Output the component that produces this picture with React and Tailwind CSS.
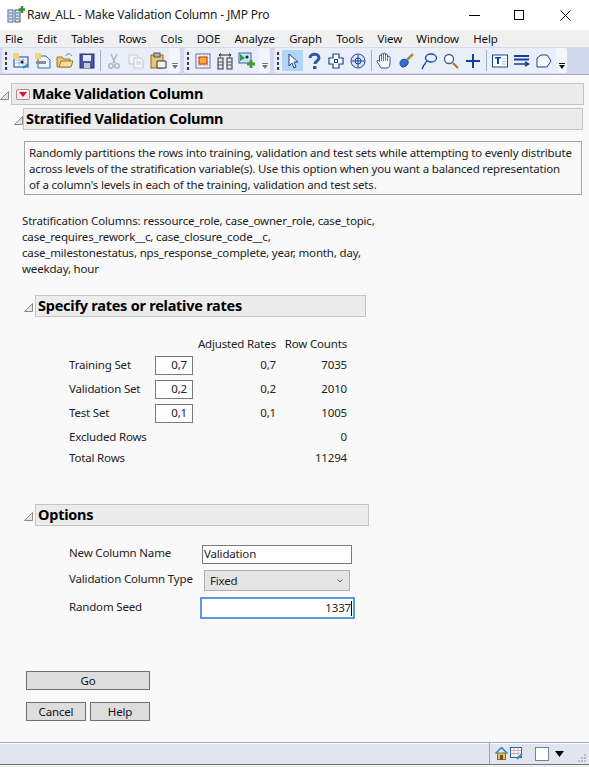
const font = { fontFamily: '"Noto Sans", sans-serif' };

function Ico({ children, w = 18 }) {
  return (
    <svg width={w} height="18" viewBox="0 0 18 18" fill="none" className="block shrink-0">
      {children}
    </svg>
  );
}

function Tri() {
  return (
    <svg width="10" height="10" viewBox="0 0 10 10" className="block shrink-0 mt-[4px]">
      <path d="M8.500 .5V8.500H.5Z" fill="#e4e4e4" stroke="#8a8a8a" strokeWidth="1" />
    </svg>
  );
}

function Grip() {
  return (
    <div className="flex flex-col gap-[2px] w-[3px] mx-[2px] shrink-0">
      <div className="w-[2px] h-[3px] bg-[#444]" />
      <div className="w-[2px] h-[3px] bg-[#444]" />
      <div className="w-[2px] h-[3px] bg-[#444]" />
      <div className="w-[2px] h-[3px] bg-[#444]" />
    </div>
  );
}

function Overflow({ dark }) {
  return (
    <div className="w-[11px] self-stretch bg-[#f2f5fb] rounded-r-[3px] flex flex-col items-center justify-end pb-[4px] gap-[1px]">
      <div className={dark ? 'w-[6px] h-[1px] bg-[#111]' : 'w-[6px] h-[1px] bg-[#777]'} />
      <svg width="6" height="4" viewBox="0 0 6 4" className="block"><path d="M0 0H6L3 4Z" fill={dark ? '#111' : '#777'} /></svg>
    </div>
  );
}

function Slot({ children, on }) {
  return (
    <div className={on ? 'w-[21px] h-[21px] bg-[#b4d4f5] flex items-center justify-center shrink-0' : 'w-[22px] h-[21px] flex items-center justify-center shrink-0'}>
      {children}
    </div>
  );
}

function Sep() {
  return <div className="w-px h-[21px] bg-[#a8b0c4] mx-[2px] shrink-0" />;
}

const blue = '#12439b';

function Toolbar() {
  return (
    <div className="h-[28px] bg-[#d3daee] border-b border-[#9fabd0] flex items-center pl-[2px] gap-[4px] shrink-0">
      <div className="h-[25px] w-[178px] bg-[#e9eef8] rounded-[3px] flex items-center pl-[1px]">
        <Grip />
        <div className="flex items-center">
          <Slot>
            <Ico>
              <rect x="2" y="5" width="14" height="10" fill="#fff" stroke={blue} />
              <path d="M2 8H16M2 11H16M7 5V15M11 5V15" stroke="#7f9ccc" strokeWidth=".7" />
              <rect x="1" y="1" width="6" height="6" fill="#f0d878" />
              <circle cx="10" cy="10" r="1.5" fill="#222" />
              <path d="M11 16L16 12" stroke="#2a8fd8" strokeWidth="2" />
            </Ico>
          </Slot>
          <Slot>
            <Ico>
              <path d="M4 4H12L16 8V16H4Z" fill="#eef4fb" stroke="#2c6fa8" />
              <rect x="1" y="1" width="6" height="6" fill="#f0d878" />
              <rect x="2" y="9" width="10" height="3" fill="#8d8d8d" />
            </Ico>
          </Slot>
          <Slot>
            <Ico>
              <path d="M1 15V5H6L8 7H14V15Z" fill="#e8c878" stroke="#9a7a30" />
              <path d="M3 15L5 9H17L15 15Z" fill="#f6dd9a" stroke="#9a7a30" />
              <path d="M10 4C11 1 14 1 16 4" stroke="#5a7fb0" />
            </Ico>
          </Slot>
          <Slot>
            <Ico>
              <rect x="2" y="2" width="14" height="14" fill="#4a55a8" stroke="#2a2f70" />
              <rect x="5" y="3" width="8" height="6" fill="#e4e8f4" />
              <rect x="6" y="11" width="6" height="5" fill="#c8c8d8" />
            </Ico>
          </Slot>
          <Sep />
          <Slot>
            <Ico>
              <path d="M6 2L10 11M12 2L8 11" stroke="#a9b8cc" strokeWidth="1.5" />
              <circle cx="6" cy="14" r="2.2" stroke="#a9b8cc" strokeWidth="1.5" />
              <circle cx="12" cy="14" r="2.2" stroke="#a9b8cc" strokeWidth="1.5" />
            </Ico>
          </Slot>
          <Slot>
            <Ico>
              <path d="M2 3H9L11 5V12H2Z" fill="#f2f4f8" stroke="#c2cbd9" />
              <path d="M7 6H14L16 8V16H7Z" fill="#f7f8fb" stroke="#c2cbd9" />
              <path d="M9 10H14M9 12H14" stroke="#c2cbd9" />
            </Ico>
          </Slot>
          <Slot>
            <Ico>
              <rect x="2" y="3" width="12" height="13" fill="#e8c878" stroke="#8a6a28" />
              <rect x="5" y="1" width="6" height="4" fill="#b4b4b4" stroke="#555" />
              <path d="M8 9H17V16H8Z" fill="#f4f4f4" stroke="#333" />
            </Ico>
          </Slot>
        </div>
        <div className="ml-auto self-stretch flex"><Overflow /></div>
      </div>
      <div className="h-[25px] w-[86px] bg-[#e9eef8] rounded-[3px] flex items-center pl-[1px]">
        <Grip />
        <div className="flex items-center">
          <Slot>
            <Ico>
              <rect x="2" y="2" width="14" height="14" fill="#fff" stroke="#5a6fa8" />
              <path d="M2 6H16M2 10H16M2 13H16M6 2V16M10 2V16M13 2V16" stroke="#d8a0a0" strokeWidth=".7" />
              <rect x="5" y="5" width="8" height="7" fill="#f0b040" stroke="#c03020" />
            </Ico>
          </Slot>
          <Slot>
            <Ico>
              <path d="M3 3H15M3 3L5 1.5M3 3L5 4.5M15 3L13 1.5M15 3L13 4.5" stroke="#222" />
              <rect x="2" y="6" width="5" height="11" fill="#dfe6f2" stroke="#333" />
              <rect x="11" y="6" width="5" height="11" fill="#dfe6f2" stroke="#333" />
              <path d="M2 10H7M2 13H7M11 10H16M11 13H16" stroke="#555" />
            </Ico>
          </Slot>
          <Slot>
            <Ico>
              <rect x="1" y="1" width="12" height="10" fill="#cfe0f4" stroke="#3a6a9a" />
              <path d="M2 2L7 6L2 9Z" fill="#2a9a5a" />
              <circle cx="9" cy="5" r="1.5" fill="#223" />
              <path d="M13 8V16M9 12H17" stroke="#3aa030" strokeWidth="3" />
            </Ico>
          </Slot>
        </div>
        <div className="ml-auto self-stretch flex"><Overflow /></div>
      </div>
      <div className="h-[25px] w-[293px] bg-[#e9eef8] rounded-[3px] flex items-center pl-[1px]">
        <Grip />
        <div className="flex items-center">
          <Slot on>
            <Ico>
              <path d="M5 2V14L8 11L10 16L12 15L10 10H14Z" fill="#fff" stroke={blue} />
            </Ico>
          </Slot>
          <Slot>
            <Ico>
              <path d="M5 6C5 1 14 1 14 6C14 9 10 9 10 12" stroke="#2a58a8" strokeWidth="3" />
              <rect x="8" y="14" width="3.5" height="3" fill="#2a58a8" />
            </Ico>
          </Slot>
          <Slot>
            <Ico>
              <path d="M6 2H12V6H16V12H12V16H6V12H2V6H6Z" fill="#fff" stroke={blue} strokeWidth="1.2" />
              <rect x="7.5" y="7.5" width="3" height="3" stroke={blue} />
            </Ico>
          </Slot>
          <Slot>
            <Ico>
              <circle cx="9" cy="9" r="7" fill="#dbe6f6" stroke={blue} />
              <circle cx="9" cy="9" r="3" stroke={blue} />
              <path d="M9 3V15M3 9H15" stroke={blue} />
            </Ico>
          </Slot>
          <Sep />
          <Slot>
            <Ico>
              <path d="M5 16L1 9.500C.5 8 2.500 8 3.500 9.500V4C3.500 2.800 5.500 2.800 5.500 4V2.500C5.500 1.300 7.500 1.300 7.500 2.500V2C7.500 .8 9.500 .8 9.500 2V3C9.500 1.800 11.500 1.800 11.500 3V5C11.500 4 14 4 14 5.500V11C14 14 13 16 11 16Z" fill="#fff" stroke={blue} strokeWidth=".9" />
              <path d="M5.500 4V9M7.500 2.500V9M9.500 3V9M11.500 5V9" stroke={blue} strokeWidth=".7" />
            </Ico>
          </Slot>
          <Slot>
            <Ico>
              <path d="M2 11C2 7 8 6 10 9C11 12 8 15 5 15C3 15 2 13 2 11Z" fill="#2f6fd0" stroke={blue} />
              <path d="M9 8L15 2" stroke="#b08a38" strokeWidth="2.500" />
            </Ico>
          </Slot>
          <Slot>
            <Ico>
              <ellipse cx="11" cy="6" rx="5.500" ry="4" stroke={blue} strokeWidth="1.300" />
              <path d="M7 9C5 10 6 12 4 13C3 14 3 16 2 17" stroke={blue} strokeWidth="1.300" />
            </Ico>
          </Slot>
          <Slot>
            <Ico>
              <circle cx="7" cy="7" r="4.500" fill="#fff" stroke="#405a90" strokeWidth="1.300" />
              <path d="M11 11L16 16" stroke="#a87a28" strokeWidth="2.200" />
            </Ico>
          </Slot>
          <Slot>
            <Ico>
              <path d="M9 2V16M2 9H16" stroke={blue} strokeWidth="2" />
            </Ico>
          </Slot>
          <Sep />
          <Slot>
            <Ico>
              <rect x="1.500" y="3" width="15" height="12" fill="#fff" stroke={blue} />
              <path d="M4 5H10V6.500H8V12H6V6.500H4Z" fill={blue} />
              <path d="M11 7H15M11 9.500H15M11 12H15" stroke="#a8c0e0" />
            </Ico>
          </Slot>
          <Slot>
            <Ico>
              <path d="M1 4H16M1 7.500H16" stroke={blue} strokeWidth="2" />
              <path d="M1 12H14M12 10L15.500 12L12 14" stroke={blue} strokeWidth="1.500" />
            </Ico>
          </Slot>
          <Slot>
            <Ico>
              <path d="M2 6L6 3H12L16 9L12 15H2Z" fill="#f6f8fc" stroke={blue} />
            </Ico>
          </Slot>
        </div>
        <div className="ml-auto self-stretch flex"><Overflow dark /></div>
      </div>
    </div>
  );
}

function Header({ title, className }) {
  return (
    <div className={'h-[22px] bg-[#ececec] border border-[#c4c4c4] flex items-center text-[14.5px] tracking-[-0.25px] font-bold text-black ' + className}>
      <span className="-mt-[1px]">{title}</span>
    </div>
  );
}

function TextBox({ value, className }) {
  return (
    <div className={'bg-white border border-[#7a7a7a] flex items-center ' + className}>{value}</div>
  );
}

function Button({ label, className }) {
  return (
    <button className={'h-[19px] bg-[#dddddd] border border-[#707070] text-[#111] flex items-center justify-center ' + className}>
      {label}
    </button>
  );
}

const rates = [
  ['Training Set', '0,7', '0,7', '7035'],
  ['Validation Set', '0,2', '0,2', '2010'],
  ['Test Set', '0,1', '0,1', '1005'],
];

const menus = ['File', 'Edit', 'Tables', 'Rows', 'Cols', 'DOE', 'Analyze', 'Graph', 'Tools', 'View', 'Window', 'Help'];

export default function App() {
  return (
    <div className="w-[589px] h-[767px] flex flex-col bg-[#f9f9f9] text-[11.5px] tracking-[-0.17px] text-[#222] overflow-hidden" style={font}>
      {/* title bar */}
      <div className="h-[30px] bg-white flex items-center shrink-0">
        <svg width="18" height="18" viewBox="0 0 18 18" className="ml-[7px] block shrink-0">
          <rect x="1" y="4" width="5" height="12" fill="#dfe8f5" stroke="#3e6fb0" />
          <rect x="8" y="4" width="5" height="12" fill="#dfe8f5" stroke="#555" />
          <path d="M2 7H5M2 10H5M2 13H5M9 7H12M9 10H12M9 13H12" stroke="#3e6fb0" />
          <path d="M15 0V7M11.500 3.500H18" stroke="#2a9a30" strokeWidth="2.500" />
        </svg>
        <span className="ml-[2px] text-[12px] tracking-[-0.19px]">Raw_ALL - Make Validation Column - JMP Pro</span>
        <div className="ml-auto flex items-center pr-[18px]">
          <div className="w-[11px] h-px bg-black" />
          <div className="ml-[34px] w-[10px] h-[10px] border border-black" />
          <svg width="11" height="11" viewBox="0 0 11 11" className="ml-[36px] block"><path d="M.5 .5L10.500 10.500M10.500 .5L.5 10.500" stroke="#000" /></svg>
        </div>
      </div>

      {/* menu */}
      <div className="h-[17px] bg-[#f0f0f0] flex items-center pl-[5px] gap-[14.3px] shrink-0 text-[#111]">
        {menus.map((m) => <span key={m}>{m}</span>)}
      </div>

      <Toolbar />

      {/* report */}
      <div className="flex-1 min-h-0">
        <div className="pt-[8px]">
          <div className="flex items-center">
            <Tri />
            <div className="h-[22px] w-[573px] ml-[1px] bg-[#ececec] border border-[#c4c4c4] flex items-center text-[14.5px] tracking-[-0.25px] font-bold text-black">
              <div className="w-[14px] h-[11px] ml-[4px] mr-[2px] bg-[#f6eaea] border border-[#b88a8a] rounded-[2px] flex items-center justify-center">
                <svg width="8" height="5" viewBox="0 0 8 5" className="block"><path d="M0 0H8L4 5Z" fill="#d8102a" /></svg>
              </div>
              <span className="-mt-[1px]">Make Validation Column</span>
            </div>
          </div>
          <div className="flex items-center pl-[14px] mt-[3px]">
            <Tri />
            <Header title="Stratified Validation Column" className="w-[560px] -ml-[1px] pl-[2px]" />
          </div>
          <div className="ml-[24px] mt-[11px] w-[558px] h-[54px] border border-[#a4a4a4] px-[4px] pt-[2px] flex flex-col justify-center leading-[16px] whitespace-nowrap">
            <div>Randomly partitions the rows into training, validation and test sets while attempting to evenly distribute</div>
            <div>across levels of the stratification variable(s). Use this option when you want a balanced representation</div>
            <div>of a column's levels in each of the training, validation and test sets.</div>
          </div>
          <div className="ml-[22px] mt-[18px] leading-[16px] whitespace-nowrap">
            <div>Stratification Columns: ressource_role, case_owner_role, case_topic,</div>
            <div>case_requires_rework__c, case_closure_code__c,</div>
            <div>case_milestonestatus, nps_response_complete, year, month, day,</div>
            <div>weekday, hour</div>
          </div>
          <div className="flex items-center pl-[24px] mt-[18px]">
            <Tri />
            <Header title="Specify rates or relative rates" className="w-[331px] ml-[1px] pl-[2px]" />
          </div>

          {/* rates table */}
          <div className="ml-[69px] mt-[17px] w-[278px] grid grid-cols-[86px_38px_83px_71px] items-center whitespace-nowrap">
            <div className="col-start-3 text-right h-[19px] leading-[19px]">Adjusted Rates</div>
            <div className="text-right h-[19px] leading-[19px]">Row Counts</div>
            {rates.map(([name, rate, adj, count]) => (
              <div key={name} className="contents">
                <div className="h-[24px] leading-[24px]">{name}</div>
                <TextBox value={rate} className="h-[19px] justify-end pr-[5px]" />
                <div className="text-right">{adj}</div>
                <div className="text-right">{count}</div>
              </div>
            ))}
            <div className="h-[24px] leading-[24px]">Excluded Rows</div>
            <div className="col-start-4 text-right">0</div>
            <div className="h-[18px] leading-[18px]">Total Rows</div>
            <div className="col-start-4 text-right">11294</div>
          </div>

          <div className="flex items-center pl-[24px] mt-[37px]">
            <Tri />
            <Header title="Options" className="w-[334px] ml-[1px] pl-[2px]" />
          </div>

          {/* options */}
          <div className="ml-[69px] mt-[18px] w-[286px] flex flex-col whitespace-nowrap">
            <div className="flex items-center h-[20px]">
              <span className="w-[133px] -mt-[2px]">New Column Name</span>
              <TextBox value="Validation" className="w-[150px] h-[19px] pl-[1px]" />
            </div>
            <div className="flex items-center h-[21px] mt-[6px]">
              <span className="w-[135px] -mt-[3px]">Validation Column Type</span>
              <div className="w-[146px] h-[21px] bg-[#e4e4e4] border border-[#adadad] flex items-center pl-[5px]">
                <span>Fixed</span>
                <svg width="6" height="4" viewBox="0 0 6 4" className="ml-auto mr-[6px] block"><path d="M.5 .5L3 3L5.500 .5" fill="none" stroke="#606060" /></svg>
              </div>
            </div>
            <div className="flex items-center h-[22px] mt-[6px]">
              <span className="w-[131px] -mt-[2px]">Random Seed</span>
              <div className="w-[155px] h-[22px] bg-white border-2 border-[#5a9ae0] flex items-center justify-end pr-[1px]">
                <span>1337</span>
                <div className="w-px h-[15px] bg-black" />
              </div>
            </div>
          </div>

          {/* actions */}
          <div className="ml-[26px] mt-[52px] w-[124px] flex flex-col gap-[12px]">
            <Button label="Go" className="w-[124px]" />
            <div className="flex gap-[4px]">
              <Button label="Cancel" className="w-[60px]" />
              <Button label="Help" className="w-[60px]" />
            </div>
          </div>
        </div>
      </div>

      {/* status bar */}
      <div className="h-[23px] shrink-0 border-t border-[#9fabd0] bg-[#e0e6f0] border-b border-b-[#777] shadow-[inset_0_1px_0_#fff] flex items-center justify-end">
        <div className="self-stretch w-px bg-[#9aa4b4]" />
        <div className="ml-[5px] flex items-center gap-[2px]">
          <svg width="13" height="13" viewBox="0 0 13 13" className="block">
            <path d="M.5 6.500L6.500 .5L12.500 6.500" fill="none" stroke="#2a7fc8" strokeWidth="1.500" />
            <rect x="2.500" y="6" width="8" height="6.500" fill="#e8c060" stroke="#8a6a28" />
            <rect x="5" y="8" width="3" height="4.500" fill="#7a4a18" />
          </svg>
          <svg width="13" height="13" viewBox="0 0 13 13" className="block">
            <rect x=".5" y=".5" width="11" height="10" fill="#fff" stroke="#2a5aa8" />
            <path d="M.5 3.500H11.500M.5 6.500H11.500M4 .5V10.500M8 .5V10.500" stroke="#c88" strokeWidth=".7" />
            <path d="M7 12L12 7" stroke="#2a8fd8" strokeWidth="2" />
          </svg>
        </div>
        <div className="ml-[12px] w-[14px] h-[14px] bg-white border border-[#808080]" />
        <svg width="9" height="6" viewBox="0 0 9 6" className="ml-[6px] block"><path d="M0 0H9L4.500 6Z" fill="#000" /></svg>
        <svg width="25" height="21" viewBox="0 0 25 21" className="block">
          <path d="M20 12H22M17 15H19M20 15H22M14 18H16M17 18H19M20 18H22" stroke="#b4bcc8" strokeWidth="2" />
        </svg>
      </div>
      <div className="h-[2px] bg-[#f0f0f0] shrink-0" />
    </div>
  );
}
